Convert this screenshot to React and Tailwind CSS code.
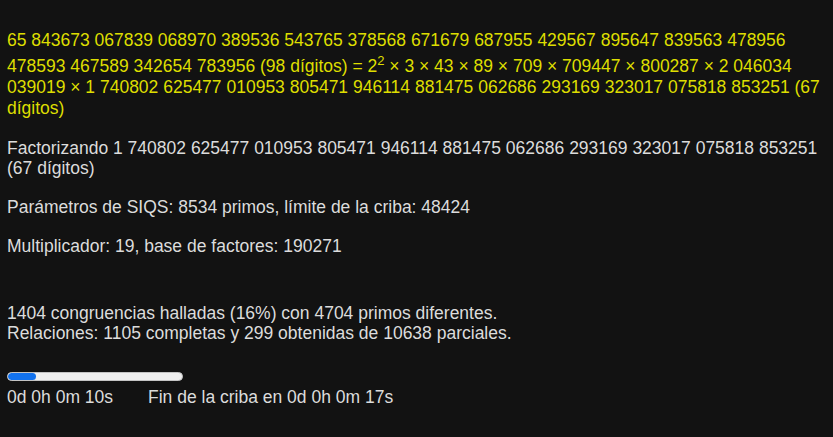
export default function App() {
  return (
    <div className="min-h-[437px] bg-[#121212] px-[7px] pt-[30px] font-['Liberation_Sans',Arial,sans-serif] text-[17.5px] leading-[20px] text-[#dcdcdc]">
      <p className="leading-[21px] text-[#dede00]">
        65 843673 067839 068970 389536 543765 378568 671679 687955 429567 895647 839563 478956 478593 467589 342654 783956 (98 dígitos) = 2
        <sup className="static top-0 align-super text-[13px] leading-[20px]">2</sup> × 3 × 43 × 89 × 709 × 709447 × 800287 × 2 046034 039019 × 1 740802 625477 010953 805471 946114 881475 062686 293169 323017 075818 853251 (67 dígitos)
      </p>
      <p className="mt-[19px]">
        Factorizando 1 740802 625477 010953 805471 946114 881475 062686 293169 323017 075818 853251 (67 dígitos)
      </p>
      <p className="mt-[19px]">Parámetros de SIQS: 8534 primos, límite de la criba: 48424</p>
      <p className="mt-[19px]">Multiplicador: 19, base de factores: 190271</p>
      <p className="mt-[47px]">1404 congruencias halladas (16%) con 4704 primos diferentes.</p>
      <p>Relaciones: 1105 completas y 299 obtenidas de 10638 parciales.</p>
      <div className="mt-[29px] h-[9px] w-[176px] overflow-hidden rounded-full border border-[#c4c4c4] bg-[#efefef]">
        <div className="h-full rounded-full bg-[#1272ee]" style={{ width: "16%" }} />
      </div>
      <div className="mt-[6px] flex">
        <span className="w-[141px]">0d 0h 0m 10s</span>
        <span>Fin de la criba en 0d 0h 0m 17s</span>
      </div>
    </div>
  );
}
